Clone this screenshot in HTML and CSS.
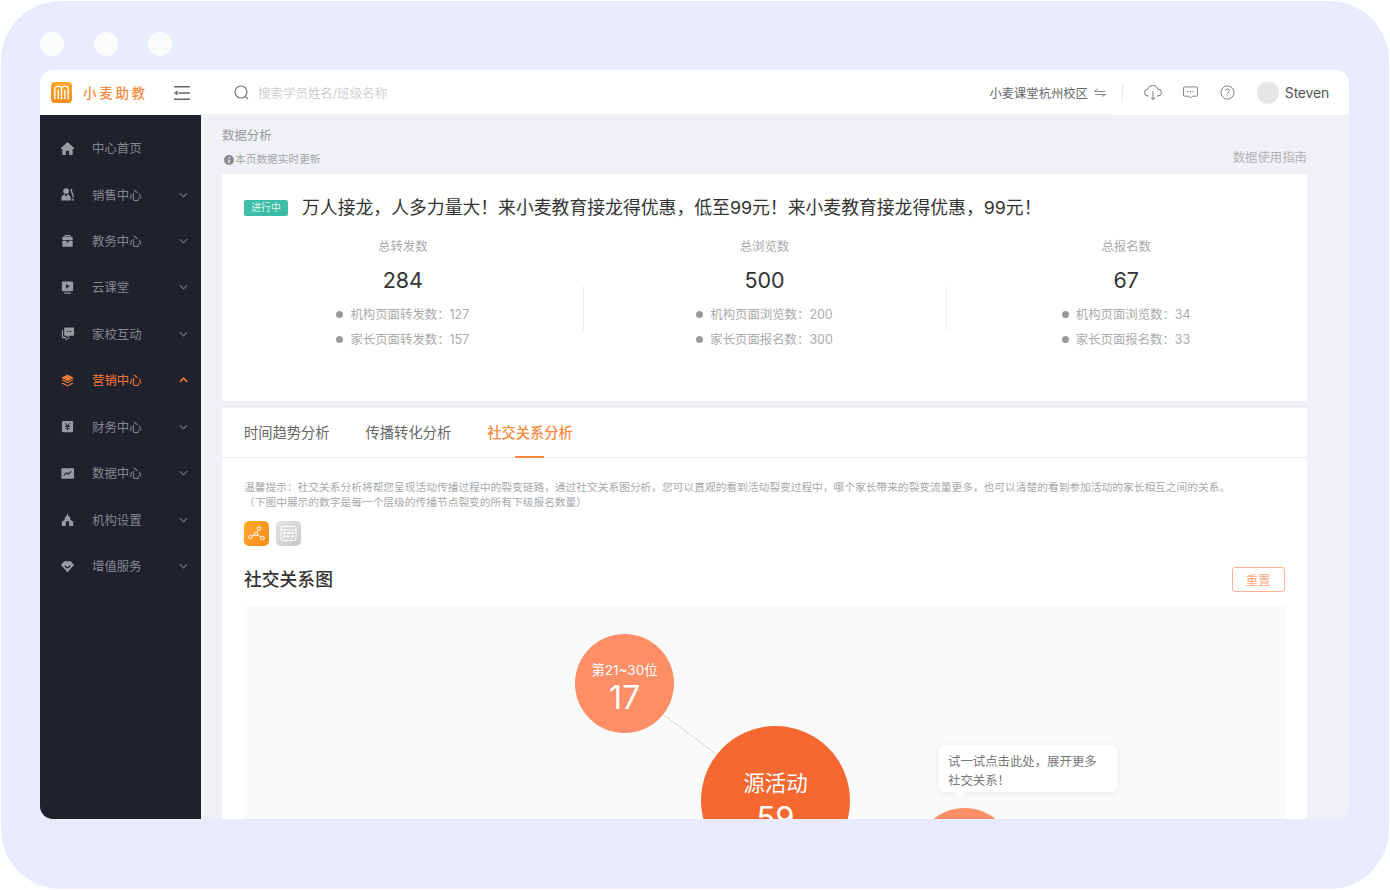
FILE: index.html
```html
<!DOCTYPE html>
<html lang="zh">
<head>
<meta charset="utf-8">
<title>数据分析</title>
<link rel="stylesheet" href="styles.css">
</head>
<body>
<div class="frame">
  <div class="dots"><i></i><i></i><i></i></div>
  <div class="app">
    <header class="top">
      <svg class="logo" viewBox="0 0 21 21"><defs><linearGradient id="lg" x1="0" y1="0" x2="0" y2="1"><stop offset="0" stop-color="#ffa928"/><stop offset="1" stop-color="#fb8a1e"/></linearGradient></defs><rect width="21" height="21" rx="4" fill="url(#lg)"/><path d="M3.800 17.500V7.500a3.350 3.350 0 0 1 6.700 0v10M10.500 7.500a3.350 3.350 0 0 1 6.700 0v10M7.200 17V8M13.800 17V8" fill="none" stroke="#fff" stroke-width="1.400"/></svg>
      <span class="brand">小麦助教</span>
      <svg class="menu-ic" viewBox="0 0 16 14" fill="none" stroke="#666" stroke-width="1.400"><path d="M0 .7h16M4.500 7H16M0 13.300h16"/><path d="M3.500 4.500 0 7l3.500 2.500z" fill="#666" stroke="none"/></svg>
      <svg class="search-ic" viewBox="0 0 15 15" fill="none" stroke="#777" stroke-width="1.200"><circle cx="7" cy="7" r="6"/><path d="M11.300 11.300 14 14"/></svg>
      <span class="placeholder">搜索学员姓名/班级名称</span>
      <div class="top-right">
        <span class="campus">小麦课堂杭州校区</span>
        <svg class="swap" viewBox="0 0 12 9" fill="none" stroke="#888" stroke-width="1"><path d="M0 3.500h11M0.500 3.500 4 0.500M1 6.500h11M11.500 6.500 8 8.500"/></svg>
        <span class="vbar"></span>
        <svg class="top-ic ic-cloud" viewBox="0 0 18 15" fill="none" stroke="#777" stroke-width="1"><path d="M5 11H4.200a3.400 3.400 0 0 1-.4-6.800 5.200 5.200 0 0 1 10-.2 3.500 3.500 0 0 1 .2 7H13"/><path d="M9 6.500v8M6.800 12.300 9 14.500l2.200-2.200"/></svg>
        <svg class="top-ic ic-msg" viewBox="0 0 16 14" fill="none" stroke="#777" stroke-width="1"><path d="M1.500 1h13a1 1 0 0 1 1 1v8a1 1 0 0 1-1 1H10l-2 2-2-2H1.500a1 1 0 0 1-1-1V2a1 1 0 0 1 1-1z"/><path d="M4.500 6h1.200M7.400 6h1.200M10.300 6h1.200" stroke-width="1.200"/></svg>
        <svg class="top-ic ic-help" viewBox="0 0 16 16" fill="none" stroke="#777" stroke-width="1"><circle cx="8" cy="8" r="7"/><path d="M6 6.300a2 2 0 1 1 3 1.700c-.7.400-1 .8-1 1.600"/><path d="M8 11v1.200"/></svg>
        <span class="avatar"></span>
        <span class="user">Steven</span>
      </div>
    </header>
    <div class="body">
      <nav class="side">
        <a class="nav"><svg class="nav-ic" viewBox="0 0 16 16"><path d="M8 1 15 7.500V8.500h-1.500V15H9.700V10.500H6.300V15H2.500V8.500H1V7.500z"/></svg><span>中心首页</span></a>
        <a class="nav"><svg class="nav-ic" viewBox="0 0 16 16"><circle cx="6.500" cy="4.300" r="3.100"/><path d="M1.500 14.500v-2.500c0-2.300 1.700-4 3.500-4.200L6.500 10.500 8 7.800c1.800.2 3.500 1.900 3.500 4.200v2.500z"/><path d="M10.800 2.200 12.300 1.800 15 11l-1.300.5z"/><path d="M12.500 14.500v-2h2v2z"/></svg><span>销售中心</span><svg class="chev" viewBox="0 0 10 6"><path d="M1 1l4 4 4-4"/></svg></a>
        <a class="nav"><svg class="nav-ic" viewBox="0 0 16 16"><path fill-rule="evenodd" d="M5 2h6v2h2.500v3.500H2.500V4H5zM6.200 3.200V4h3.600v-.8z"/><path d="M2.500 8.300h4.500v1.700h2V8.300h4.500V14a.7.700 0 0 1-.7.700H3.200a.7.700 0 0 1-.7-.7z"/></svg><span>教务中心</span><svg class="chev" viewBox="0 0 10 6"><path d="M1 1l4 4 4-4"/></svg></a>
        <a class="nav"><svg class="nav-ic" viewBox="0 0 16 16"><path fill-rule="evenodd" d="M3 1.500h10a1 1 0 0 1 1 1v8.500a1 1 0 0 1-1 1H3a1 1 0 0 1-1-1V2.500a1 1 0 0 1 1-1zM6.500 4.500v4.500l4-2.250z"/><path d="M4.500 13.300h7v1.300h-7z"/></svg><span>云课堂</span><svg class="chev" viewBox="0 0 10 6"><path d="M1 1l4 4 4-4"/></svg></a>
        <a class="nav"><svg class="nav-ic" viewBox="0 0 16 16"><path fill-rule="evenodd" d="M5.500 1.500h8.500a1 1 0 0 1 1 1v7a1 1 0 0 1-1 1H10.500L8 12.500v-2H5.500a1 1 0 0 1-1-1v-7a1 1 0 0 1 1-1zM7.500 5v1.500H9V5zM10.500 5v1.500H12V5z"/><path d="M2 4.500h1.300V11.500H6.500V14l3-1.500h1.500L6 15.500V13H3a1 1 0 0 1-1-1z"/></svg><span>家校互动</span><svg class="chev" viewBox="0 0 10 6"><path d="M1 1l4 4 4-4"/></svg></a>
        <a class="nav active"><svg class="nav-ic" viewBox="0 0 16 16"><path d="M8 1.500 14.500 5 8 8.500 1.500 5z"/><path d="M1.500 7.300 2.800 6.700 8 9.500l5.200-2.800 1.300.6L8 11z"/><path d="M1.500 10.800 2.800 10.200 8 13l5.200-2.800 1.300.6L8 14.500z"/></svg><span>营销中心</span><svg class="chev" viewBox="0 0 10 6"><path d="M1 5l4-4 4 4"/></svg></a>
        <a class="nav"><svg class="nav-ic" viewBox="0 0 16 16"><path fill-rule="evenodd" d="M3.500 2h9A1.500 1.500 0 0 1 14 3.500v9a1.500 1.500 0 0 1-1.500 1.500h-9A1.500 1.500 0 0 1 2 12.500v-9A1.500 1.500 0 0 1 3.500 2zM5.200 4.500 7 7.500H5.500v1h2v1h-2v1h2V12h1v-1.500h2v-1h-2v-1h2v-1H9l1.800-3H9.600L8 7 6.400 4.500z"/></svg><span>财务中心</span><svg class="chev" viewBox="0 0 10 6"><path d="M1 1l4 4 4-4"/></svg></a>
        <a class="nav"><svg class="nav-ic" viewBox="0 0 16 16"><path fill-rule="evenodd" d="M2 2.500h12.500a.5.5 0 0 1 .5.500v10a.5.500 0 0 1-.5.500H2a.5.500 0 0 1-.5-.5V3a.5.500 0 0 1 .5-.5zM3.500 9.800l.8.800 2.500-2.700 2 1.700 3.700-3.500-.8-.8-2.900 2.800-2-1.700z"/></svg><span>数据中心</span><svg class="chev" viewBox="0 0 10 6"><path d="M1 1l4 4 4-4"/></svg></a>
        <a class="nav"><svg class="nav-ic" viewBox="0 0 16 16"><path fill-rule="evenodd" d="M7.500 1.500h1v2L11 6v2.500l3 1.500v5H9.800v-3.500a1.800 1.800 0 0 0-3.600 0V15H2v-5l3-1.500V6l2.500-2.500z"/></svg><span>机构设置</span><svg class="chev" viewBox="0 0 10 6"><path d="M1 1l4 4 4-4"/></svg></a>
        <a class="nav"><svg class="nav-ic" viewBox="0 0 16 16"><path fill-rule="evenodd" d="M4.500 2.500h7L15 6.500 8 14 1 6.500zM4.800 6.800c.5 2 1.700 3 3.200 3s2.700-1 3.200-3l-1-.3C9.800 7.900 9 8.500 8 8.500s-1.800-.6-2.200-2z"/></svg><span>增值服务</span><svg class="chev" viewBox="0 0 10 6"><path d="M1 1l4 4 4-4"/></svg></a>
      </nav>
      <main class="main">
        <div class="crumb">数据分析</div>
        <div class="subhead">
          <span class="notice"><svg class="info" viewBox="0 0 10 10"><circle cx="5" cy="5" r="5" fill="#8c8c8c"/><path d="M5.200 2v1.300M5 4.500v3.500" stroke="#fff" stroke-width="1.200"/></svg>本页数据实时更新</span>
          <span class="guide">数据使用指南</span>
        </div>
        <section class="card summary">
          <div class="title-row"><span class="badge">进行中</span><h1>万人接龙，人多力量大！来小麦教育接龙得优惠，低至99元！来小麦教育接龙得优惠，99元！</h1></div>
          <div class="stats">
            <div class="stat">
              <div class="stat-label">总转发数</div>
              <div class="stat-num">284</div>
              <ul class="stat-list"><li>机构页面转发数：127</li><li>家长页面转发数：157</li></ul>
            </div>
            <div class="stat">
              <div class="stat-label">总浏览数</div>
              <div class="stat-num">500</div>
              <ul class="stat-list"><li>机构页面浏览数：200</li><li>家长页面报名数：300</li></ul>
            </div>
            <div class="stat">
              <div class="stat-label">总报名数</div>
              <div class="stat-num">67</div>
              <ul class="stat-list"><li>机构页面浏览数：34</li><li>家长页面报名数：33</li></ul>
            </div>
          </div>
        </section>
        <section class="card detail">
          <div class="tabs"><span class="tab">时间趋势分析</span><span class="tab">传播转化分析</span><span class="tab on">社交关系分析</span></div>
          <div class="detail-body">
            <p class="tip">温馨提示：社交关系分析将帮您呈现活动传播过程中的裂变链路，通过社交关系图分析，您可以直观的看到活动裂变过程中，哪个家长带来的裂变流量更多，也可以清楚的看到参加活动的家长相互之间的关系。<br>（下图中展示的数字是每一个层级的传播节点裂变的所有下级报名数量）</p>
            <div class="views">
              <span class="view graph"><svg viewBox="0 0 17 15" fill="none" stroke="#fff" stroke-width="1"><circle cx="11" cy="2.500" r="1.800"/><circle cx="8" cy="8" r="1.800"/><circle cx="2.500" cy="11" r="1.800"/><circle cx="14.500" cy="12" r="1.800"/><path d="M10.100 4.100 8.900 6.400M6.400 8.900 4.100 10.100M9.700 8.800 12.900 11.200"/></svg></span>
              <span class="view table"><svg viewBox="0 0 16 15" fill="none" stroke="#fff" stroke-width="1"><rect x=".5" y=".5" width="15" height="14" rx="1.500"/><path d="M.5 4h15"/><path d="M2.500 6h3v2h-3zM6.500 6h3v2h-3zM10.500 6h3v2h-3zM2.500 9.500h3v2h-3zM6.500 9.500h3v2h-3zM10.500 9.500h3v2h-3z" fill="#fff" stroke="none"/></svg></span>
            </div>
            <div class="graph-head"><h2>社交关系图</h2><button class="reset">重置</button></div>
            <div class="canvas">
              <svg class="link"><line x1="420" y1="109" x2="472" y2="148" stroke="#d8d8d8" stroke-width="1"/></svg>
              <div class="node n1"><span class="n-label">第21~30位</span><span class="n-num">17</span></div>
              <div class="node root"><span class="n-label">源活动</span><span class="n-num">59</span></div>
              <div class="node n2"></div>
              <div class="tooltip">试一试点击此处，展开更多<br>社交关系！</div>
            </div>
          </div>
        </section>
      </main>
    </div>
  </div>
</div>
</body>
</html>
```
FILE: styles.css
```css
* { box-sizing: border-box; }
html, body { margin: 0; height: 100%; background: #fff; overflow: hidden; }
body { padding: 1px; font-family: Inter, "Noto Sans CJK SC", sans-serif; }
h1, h2, p, ul { margin: 0; padding: 0; font-weight: 400; }

.frame { width: 1388px; height: 888px; background: #e8ebfe; border-radius: 60px; padding: 31px 40px 70px 39px; }
.dots { display: flex; gap: 30px; height: 24px; margin-bottom: 14px; }
.dots i { width: 24px; height: 24px; border-radius: 50%; background: #fbfbfb; }

.app { height: 749px; border-radius: 13px; overflow: hidden; display: flex; flex-direction: column; background: #eff1f6; }

.top { position: relative; flex: 0 0 45px; background: #fff; display: flex; align-items: center; }
.top::after { content: ""; position: absolute; left: 161px; width: 911px; bottom: 0; height: 1px; background: #f3f3f5; }
.logo { width: 21px; height: 21px; margin-left: 11px; flex: none; }
.brand { margin-left: 11px; margin-top: -2px; font-size: 13.500px; letter-spacing: 2.700px; color: #fb8a3c; width: 91px; white-space: nowrap; font-weight: 500; }
.menu-ic { width: 16px; height: 14px; flex: none; }
.search-ic { width: 15px; height: 15px; margin-left: 44px; flex: none; }
.placeholder { margin-left: 9px; font-size: 12.470px; color: #cfcfcf; white-space: nowrap; }
.top-right { margin-left: auto; display: flex; align-items: center; padding-right: 20px; }
.campus { font-size: 12.300px; color: #666; white-space: nowrap; }
.swap { width: 12px; height: 9px; margin-left: 6px; flex: none; }
.vbar { width: 1px; height: 18px; background: #e8e8e8; margin: 0 21px 0 16px; }
.top-ic { flex: none; }
.ic-cloud { width: 18px; height: 15px; }
.ic-msg { width: 15px; height: 13px; margin-left: 21px; }
.ic-help { width: 15px; height: 15px; margin-left: 22px; }
.avatar { width: 22px; height: 22px; border-radius: 50%; background: #e6e6e6; margin-left: 22px; }
.user { margin-left: 6px; font-size: 14px; color: #555; letter-spacing: -.2px; }

.body { flex: 1; min-height: 0; display: flex; }
.side { flex: 0 0 161px; background: #1f212d; padding-top: 9.850px; }
.nav { display: flex; align-items: center; height: 46.450px; padding-left: 20px; color: #85878e; font-size: 12.400px; }
.nav-ic { width: 15px; height: 15px; fill: #9a9ba1; flex: none; margin-right: 17px; }
.nav span { flex: 1; }
.chev { width: 9px; height: 6px; fill: none; stroke: #6f717a; stroke-width: 1.300; margin-right: 13.500px; flex: none; }
.nav.active { color: #f5793a; }
.nav.active .nav-ic { fill: #f5793a; }
.nav.active .chev { stroke: #f5793a; stroke-width: 1.800; }

.main { flex: 1; min-width: 0; overflow: hidden; padding: 0 42px 0 21px; }
.crumb { height: 34px; padding-top: 12px; font-size: 12.400px; line-height: 18px; color: #999; }
.subhead { height: 25px; display: flex; justify-content: space-between; align-items: flex-start; }
.notice { display: flex; align-items: center; font-size: 10.700px; line-height: 14px; margin-top: 4px; color: #a6a6a6; padding-left: 2px; }
.info { width: 10px; height: 10px; margin-right: 1px; flex: none; }
.guide { font-size: 12.400px; line-height: 16px; margin-top: 1px; color: #b2b2b2; }

.card { background: #fff; }
.summary { height: 227px; padding: 0 22px; margin-bottom: 7px; }
.title-row { display: flex; align-items: center; height: 66px; }
.badge { width: 44px; height: 16px; margin-top: 1px; border-radius: 2px; background: #3ebda6; color: #dff5f0; font-size: 9.800px; line-height: 16px; text-align: center; flex: none; }
h1 { margin-left: 14px; margin-top: -2px; font-size: 17.840px; color: #333; white-space: nowrap; }
.stats { display: grid; grid-template-columns: repeat(3, 1fr); margin: 0 -22px; }
.stat { position: relative; display: flex; flex-direction: column; align-items: center; }
.stat + .stat::before { content: ""; position: absolute; left: -1px; top: 46px; height: 45px; width: 1px; background: #eeeeee; }
.stat:last-child::before { left: 1px; }
.stat-label { font-size: 12.400px; line-height: 16px; color: #aaa; margin-top: -1px; }
.stat-num { font-size: 21.500px; line-height: 30px; margin-top: 10px; color: #333; }
.stat-list { list-style: none; margin-top: 7px; }
.stat-list li { position: relative; padding-left: 14px; font-size: 12.400px; line-height: 25px; color: #aaa; white-space: nowrap; }
.stat-list li::before { content: ""; position: absolute; left: 0; top: 9px; width: 7px; height: 7px; border-radius: 50%; background: #999; }

.detail { height: 420px; }
.tabs { position: relative; display: flex; gap: 36px; height: 50px; padding: 0 22px; border-bottom: 1px solid #ebebeb; align-items: center; }
.tab { font-size: 14.280px; line-height: 20px; color: #666; position: relative; margin-top: 1px; }
.tab.on { color: #fb8a3c; font-weight: 500; }
.tab.on::after { content: ""; position: absolute; left: 28px; width: 29px; top: 33px; height: 2px; background: #fb8a3c; }
.detail-body { padding: 22px 22px 0; }
.tip { font-size: 10.730px; line-height: 15px; color: #a8a8a8; white-space: nowrap; }
.views { display: flex; gap: 7px; margin-top: 11px; }
.view { width: 25px; height: 25px; border-radius: 5px; display: flex; align-items: center; justify-content: center; }
.view svg { width: 17px; height: 15px; }
.graph { background: linear-gradient(135deg, #ffa92a, #fd8b1b); }
.table { background: linear-gradient(135deg, #e2e2e2, #c9c9c9); }
.graph-head { display: flex; justify-content: space-between; align-items: center; margin-top: 21px; height: 25px; }
h2 { font-size: 17.800px; color: #333; font-weight: 500; margin-bottom: 4px; }
.reset { width: 53.500px; height: 25px; border: 1px solid #fdb391; border-radius: 3px; background: #fff; color: #fca983; font: 12.400px "Noto Sans CJK SC", sans-serif; padding: 0; }

.canvas { position: relative; height: 300px; margin-top: 14px; background: #fafafa; }
.link { position: absolute; left: 0; top: 0; width: 100%; height: 100%; }
.node { position: absolute; border-radius: 50%; display: flex; flex-direction: column; align-items: center; color: #fff; }
.n1, .n2 { width: 99px; height: 99px; background: #fd8e65; }
.n1 { left: 331px; top: 28px; padding-top: 26px; }
.n1 .n-label { font-size: 13.500px; line-height: 20px; }
.n1 .n-num { font-size: 32px; line-height: 36px; }
.root { left: 457px; top: 120px; width: 149px; height: 149px; background: #f5682f; padding-top: 41px; }
.root .n-label { font-size: 21.500px; line-height: 32px; }
.root .n-num { font-size: 31px; line-height: 44px; margin-top: -3px; }
.n2 { left: 671px; top: 202px; }
.tooltip { position: absolute; left: 695px; top: 139px; width: 178px; height: 47px; padding: 8px 9px; background: #fff; border-radius: 5px; box-shadow: 0 1px 6px rgba(0,0,0,.07); font-size: 12.400px; line-height: 18.500px; color: #777; white-space: nowrap; }
.tooltip::after { content: ""; position: absolute; left: 17px; bottom: -4px; width: 8px; height: 8px; background: #fff; transform: rotate(45deg); }
```
